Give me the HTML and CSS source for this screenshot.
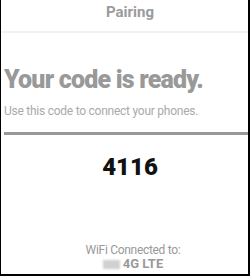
FILE: index.html
```html
<!DOCTYPE html>
<html lang="en">
<head>
    <meta charset="UTF-8">
    <meta name="viewport" content="width=device-width, initial-scale=1.0">
    <title>Pairing</title>
    <link rel="stylesheet" href="styles.css">
</head>
<body>
    <div class="screen">
        <header class="top-bar">
            <h2>Pairing</h2>
        </header>

        <section class="intro">
            <h1>Your code is ready.</h1>
            <p>Use this code to connect your phones.</p>
        </section>
        <div class="rule"></div>

        <section class="code">4116</section>

        <footer class="network">
            <p>WiFi Connected to:</p>
            <div class="network-name"><span class="blur"></span>4G LTE</div>
        </footer>
    </div>
</body>
</html>
```
FILE: styles.css
```css
/* Reset */
* {
    margin: 0;
    padding: 0;
    box-sizing: border-box;
}

body {
    font-family: 'Roboto', 'Liberation Sans', sans-serif;
    background-color: white;
    color: #999;
}

.screen {
    width: 250px;
    height: 276px;
    border-left: 1px solid #000;
    border-right: 2px solid #000;
    border-bottom: 2px solid #000;
    display: flex;
    flex-direction: column;
}

.top-bar {
    height: 33px;
    border-bottom: 2px solid #f2f2f2;
    padding: 3px 0 0 11px;
    text-align: center;
}

.top-bar h2 {
    font-size: 15px;
    line-height: 18px;
    font-weight: bold;
    color: #9b9b9b;
}

.intro {
    padding: 32px 0 0 3px;
}

.intro h1 {
    font-size: 25px;
    line-height: 30px;
    font-weight: 900;
    letter-spacing: -0.8px;
    color: #999;
}

.intro p {
    margin-top: 9px;
    font-size: 12px;
    line-height: 14px;
    letter-spacing: -0.25px;
    color: #aaa;
}

.rule {
    margin: 14px 0 0 3px;
    height: 3px;
    background-color: #999;
}

.code {
    padding: 18px 0 0 11px;
    text-align: center;
    font-size: 24px;
    line-height: 28px;
    font-weight: 900;
    color: #111;
}

.network {
    margin-top: auto;
    padding: 0 0 3px 17px;
    text-align: center;
    font-size: 12px;
    line-height: 14px;
    color: #999;
}

.network p {
    letter-spacing: -0.3px;
}

.network-name {
    display: flex;
    justify-content: center;
    align-items: center;
    gap: 3px;
    font-weight: bold;
    font-size: 13px;
    color: #999;
}

.blur {
    width: 17px;
    height: 9px;
    background-color: #d0d0d0;
    filter: blur(1px);
}
```
